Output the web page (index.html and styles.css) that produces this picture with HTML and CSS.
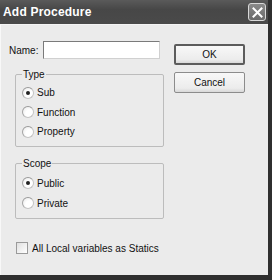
FILE: index.html
```html
<!DOCTYPE html>
<html>
<head>
    <meta charset="UTF-8">
    <title>Add Procedure</title>
    <link rel="stylesheet" href="styles.css">
</head>
<body>
    <div class="window">
        <div class="titlebar">
            <span class="title">Add Procedure</span>
            <span class="close-btn">
                <svg width="11" height="11" viewBox="0 0 11 11">
                    <path d="M1.5 1.5 L9.5 9.5 M9.5 1.5 L1.5 9.5" stroke="#fff" stroke-width="2" stroke-linecap="square"/>
                </svg>
            </span>
        </div>

        <div class="client">
            <div class="main">
                <!-- left side -->
                <div class="left">
                    <div class="name-row">
                        <label for="procName">Name:</label>
                        <input type="text" id="procName" class="name-input">
                    </div>

                    <fieldset class="group group-type">
                        <legend>Type</legend>
                        <div class="option"><span class="radio checked"></span>Sub</div>
                        <div class="option"><span class="radio"></span>Function</div>
                        <div class="option"><span class="radio"></span>Property</div>
                    </fieldset>

                    <fieldset class="group group-scope">
                        <legend>Scope</legend>
                        <div class="option"><span class="radio checked"></span>Public</div>
                        <div class="option"><span class="radio"></span>Private</div>
                    </fieldset>
                </div>

                <!-- buttons -->
                <div class="buttons">
                    <button class="btn btn-default">OK</button>
                    <button class="btn">Cancel</button>
                </div>
            </div>

            <div class="check-row">
                <span class="checkbox"></span>All Local variables as Statics
            </div>
        </div>
    </div>
</body>
</html>
```

FILE: styles.css
```css
* {
    margin: 0;
    padding: 0;
    box-sizing: border-box;
}

body {
    background-color: #2f2f2f;
    width: 272px;
    height: 280px;
    overflow: hidden;
    font-family: 'Liberation Sans', Arial, sans-serif;
    font-size: 10px;
    color: #111;
}

/* Window */
.window {
    width: 268px;
    height: 275px;
    display: flex;
    flex-direction: column;
    background-color: #ebebeb;
}

.titlebar {
    height: 24px;
    background: linear-gradient(to bottom, #5a5a5a, #474747 40%, #4a4a4a);
    display: flex;
    align-items: center;
    justify-content: space-between;
    padding: 0 2px 0 3px;
}

.title {
    color: #fff;
    font-weight: bold;
    font-size: 12px;
    letter-spacing: 0.2px;
}

.close-btn {
    width: 18px;
    height: 18px;
    border: 1px solid #d8d8d8;
    border-radius: 3px;
    background: linear-gradient(to bottom, #8a8a8a, #6a6a6a);
    display: flex;
    align-items: center;
    justify-content: center;
}

.client {
    flex: 1;
    border-left: 1px solid #f8f8f8;
    border-top: 1px solid #f4f4f4;
    padding: 16px 0 0 8px;
}

.main {
    display: flex;
}

.left {
    width: 155px;
}

.name-row {
    display: flex;
    align-items: center;
    gap: 4px;
}

.name-row label {
    width: 30px;
}

.name-input {
    width: 117px;
    height: 18px;
    border: 1px solid #7a7a7a;
    border-right-color: #d0d0d0;
    border-bottom-color: #d0d0d0;
    background: #fff;
    outline: none;
}

/* Group boxes */
.group {
    margin-left: 6px;
    width: 149px;
    border: 1px solid #bcbcbc;
    border-radius: 2px;
    padding: 3px 0 0 6px;
}

.group legend {
    padding: 0 1px;
    line-height: 11px;
}

.group-type {
    margin-top: 10px;
    height: 78px;
}

.group-type .option {
    height: 19.5px;
}

.group-scope {
    margin-top: 11px;
    height: 61px;
    padding-top: 4px;
}

.option {
    display: flex;
    align-items: center;
    height: 20px;
}

.radio {
    width: 12px;
    height: 12px;
    border-radius: 50%;
    border: 1px solid #c4c4c4;
    border-top-color: #9a9a9a;
    border-left-color: #a4a4a4;
    background: radial-gradient(circle at 65% 65%, #ffffff 40%, #e6e6e6 100%);
    margin-right: 3px;
    position: relative;
}

.radio.checked::after {
    content: "";
    position: absolute;
    left: 3px;
    top: 3px;
    width: 4px;
    height: 4px;
    border-radius: 50%;
    background: #222;
}

/* Buttons */
.buttons {
    display: flex;
    flex-direction: column;
    gap: 7px;
    margin-left: 10px;
    padding-top: 3px;
}

.btn {
    width: 71px;
    height: 21px;
    font-family: 'Liberation Sans', Arial, sans-serif;
    font-size: 10px;
    color: #111;
    background: linear-gradient(to bottom, #f8f8f8, #ececec 80%, #d8d8d8);
    border: 1px solid #8c8c8c;
    border-radius: 2px;
}

.btn-default {
    border: 2px solid #5c5c5c;
}

/* Checkbox */
.check-row {
    display: flex;
    align-items: center;
    margin-top: 23px;
    margin-left: 7px;
}

.checkbox {
    width: 12px;
    height: 12px;
    border: 1px solid #9a9a9a;
    background: linear-gradient(135deg, #e0e0e0, #ffffff);
    margin-right: 4px;
}
```
